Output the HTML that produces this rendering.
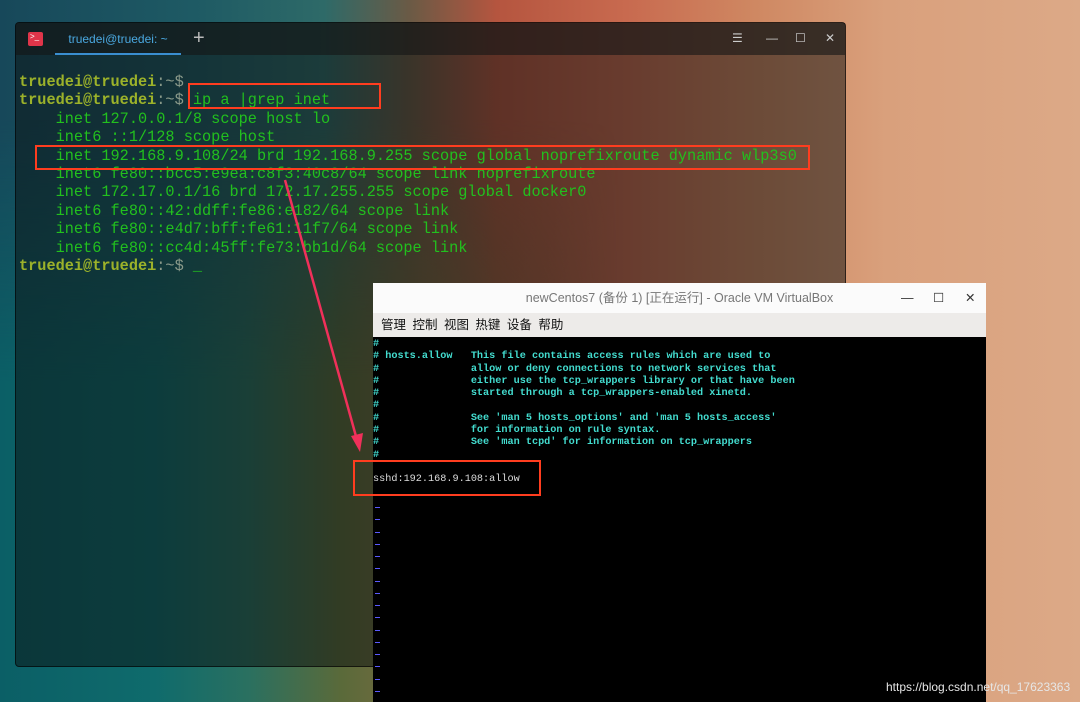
<!DOCTYPE html>
<html><head><meta charset="utf-8"><style>
*{margin:0;padding:0;box-sizing:border-box}
body{width:1080px;height:702px;overflow:hidden;position:relative;font-family:"Liberation Sans","Noto Sans CJK SC",sans-serif;
background:linear-gradient(90deg,#17485a 0%,#1e5a64 18%,#2e6a68 30%,#6b5a45 38%,#b5553f 46%,#c86a4f 58%,#cf8862 70%,#d9a07c 82%,#dca987 100%);}
.bg2{position:absolute;left:0;top:120px;width:620px;height:582px;background:linear-gradient(90deg,#0b5f66 0%,#0f6b6c 25%,#2a7060 40%,#5a6a3a 55%,#7a6a40 68%,rgba(120,100,60,0) 100%);
-webkit-mask-image:linear-gradient(180deg,transparent 0%,#000 45%);mask-image:linear-gradient(180deg,transparent 0%,#000 45%);}
.term{position:absolute;left:15px;top:22px;width:831px;height:645px;background:rgba(10,14,14,0.5);border:1px solid rgba(0,0,0,0.6);border-radius:4px;}
.tbar{height:32px;background:rgba(20,22,22,0.6);position:relative;}
.ticon{position:absolute;left:12px;top:9px;width:15px;height:14px;background:#e0354a;border-radius:2px;color:#fff;font-size:8px;line-height:10px;padding-left:2px}
.tab{position:absolute;left:39px;top:0;width:126px;height:32px;color:#4aa8e0;font-size:12px;line-height:33px;text-align:center;border-bottom:2px solid #3a8ed0}
.plus{position:absolute;left:177px;top:4px;color:#bbb;font-size:20px;}
.ctl{position:absolute;top:8px;color:#ccc;font-size:12px}
pre{position:absolute;left:3px;top:50px;font-family:"Liberation Mono",monospace;font-size:15.25px;line-height:18.4px;color:#22c01e;}
.p{color:#9cb22a;font-weight:bold}.g{color:#8a9a8a}
.red{position:absolute;border:2px solid #ff3d1f}
.vb{position:absolute;left:373px;top:283px;width:613px;height:419px;background:#000}
.vt{height:30px;background:#fbfbfb;color:#777;font-size:12.5px;line-height:31px;text-align:center;position:relative}
.vm{height:24px;background:#edebe9;font-size:12.5px;line-height:24px;color:#111;padding-left:8px;word-spacing:3px}
.vc{position:absolute;left:0;top:56px;font-family:"Liberation Mono",monospace;font-size:10.2px;line-height:12.3px;color:#43dccf;font-weight:bold;white-space:pre}
.dash{position:absolute;left:2px;width:5px;height:1px;background:#5a5aff}
.wm{position:absolute;left:886px;top:680px;color:#e6e6e6;font-size:12px;}
</style></head><body>
<div class="bg2"></div>
<div class="term">
<div class="tbar"><div class="ticon">&gt;_</div><div class="tab">truedei@truedei: ~</div><div class="plus">+</div>
<div class="ctl" style="left:716px">☰</div><div class="ctl" style="left:750px">—</div><div class="ctl" style="left:779px">☐</div><div class="ctl" style="left:809px">✕</div></div>
<pre><span class="p">truedei@truedei</span><span class="g">:~$</span>
<span class="p">truedei@truedei</span><span class="g">:~$</span> ip a |grep inet
    inet 127.0.0.1/8 scope host lo
    inet6 ::1/128 scope host
    inet 192.168.9.108/24 brd 192.168.9.255 scope global noprefixroute dynamic wlp3s0
    inet6 fe80::bcc5:e9ea:c8f3:40c8/64 scope link noprefixroute
    inet 172.17.0.1/16 brd 172.17.255.255 scope global docker0
    inet6 fe80::42:ddff:fe86:e182/64 scope link
    inet6 fe80::e4d7:bff:fe61:11f7/64 scope link
    inet6 fe80::cc4d:45ff:fe73:bb1d/64 scope link
<span class="p">truedei@truedei</span><span class="g">:~$</span> _</pre>
</div>
<div class="vb">
<div class="vt">newCentos7 (备份 1) [正在运行] - Oracle VM VirtualBox<span style="position:absolute;left:528px;color:#333">—</span><span style="position:absolute;left:560px;color:#333">☐</span><span style="position:absolute;left:592px;color:#333">✕</span></div>
<div class="vm">管理 控制 视图 热键 设备 帮助</div>
<div class="vc">#
# hosts.allow   This file contains access rules which are used to
#               allow or deny connections to network services that
#               either use the tcp_wrappers library or that have been
#               started through a tcp_wrappers-enabled xinetd.
#
#               See 'man 5 hosts_options' and 'man 5 hosts_access'
#               for information on rule syntax.
#               See 'man tcpd' for information on tcp_wrappers
#

<span style="color:#ddd;font-weight:normal">sshd:192.168.9.108:allow</span></div>
<div class="dash" style="top:224px"></div><div class="dash" style="top:236px"></div><div class="dash" style="top:249px"></div><div class="dash" style="top:261px"></div><div class="dash" style="top:273px"></div><div class="dash" style="top:285px"></div><div class="dash" style="top:298px"></div><div class="dash" style="top:310px"></div><div class="dash" style="top:322px"></div><div class="dash" style="top:334px"></div><div class="dash" style="top:347px"></div><div class="dash" style="top:359px"></div><div class="dash" style="top:371px"></div><div class="dash" style="top:383px"></div><div class="dash" style="top:396px"></div><div class="dash" style="top:408px"></div>
</div>
<div class="red" style="left:188px;top:83px;width:193px;height:26px"></div>
<div class="red" style="left:35px;top:145px;width:775px;height:25px"></div>
<div class="red" style="left:353px;top:460px;width:188px;height:36px"></div>
<svg style="position:absolute;left:0;top:0" width="1080" height="702"><line x1="285" y1="180" x2="357" y2="440" stroke="#f0305a" stroke-width="2.5"/><polygon points="360,452 351,436 363,433" fill="#f0305a"/></svg>
<div class="wm">https://blog.csdn.net/qq_17623363</div>
</body></html>
